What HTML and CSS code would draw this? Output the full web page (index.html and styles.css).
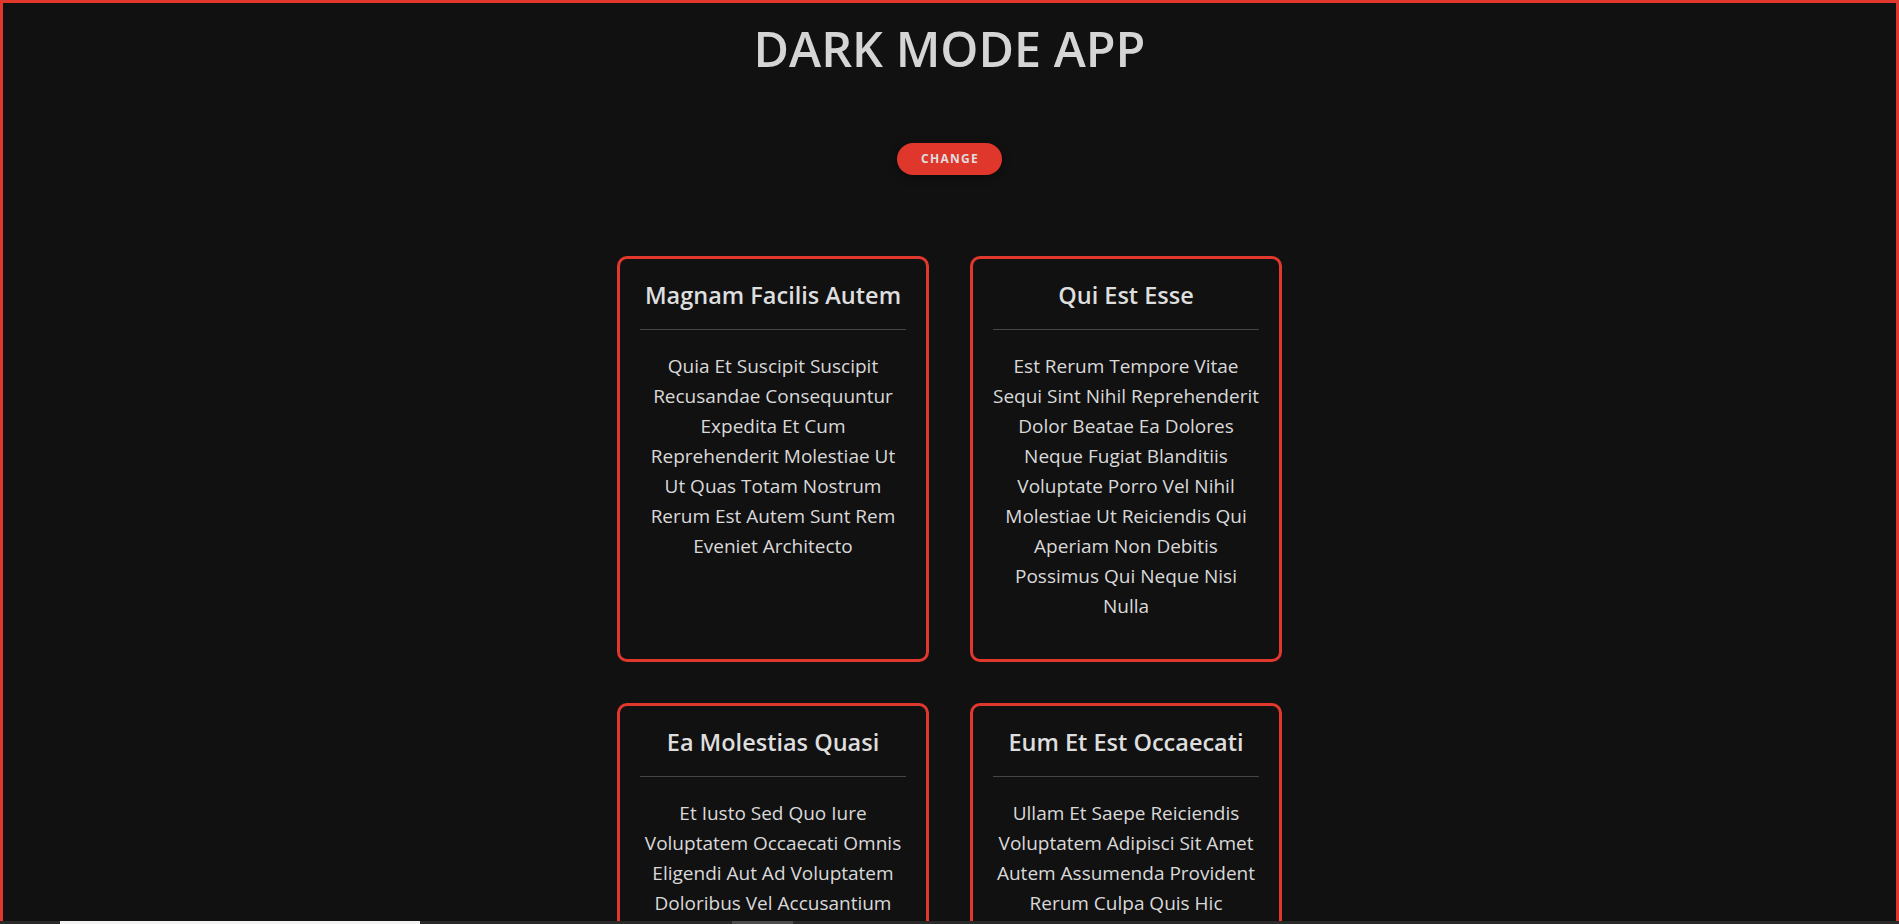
FILE: index.html
```html
<!DOCTYPE html>
<html lang="en">
<head>
<meta charset="utf-8">
<title>Dark Mode App</title>
<link rel="stylesheet" href="styles.css">
</head>
<body>
<div class="app">
  <h1 class="app-title">DARK MODE APP</h1>
  <button class="toggle" type="button">CHANGE</button>
  <main class="grid">
    <article class="card">
      <h2 class="card-title">Magnam Facilis Autem</h2>
      <p class="card-body">Quia Et Suscipit Suscipit<br>Recusandae Consequuntur<br>Expedita Et Cum<br>Reprehenderit Molestiae Ut<br>Ut Quas Totam Nostrum<br>Rerum Est Autem Sunt Rem<br>Eveniet Architecto</p>
    </article>
    <article class="card">
      <h2 class="card-title">Qui Est Esse</h2>
      <p class="card-body">Est Rerum Tempore Vitae<br>Sequi Sint Nihil Reprehenderit<br>Dolor Beatae Ea Dolores<br>Neque Fugiat Blanditiis<br>Voluptate Porro Vel Nihil<br>Molestiae Ut Reiciendis Qui<br>Aperiam Non Debitis<br>Possimus Qui Neque Nisi<br>Nulla</p>
    </article>
    <article class="card">
      <h2 class="card-title">Ea Molestias Quasi</h2>
      <p class="card-body">Et Iusto Sed Quo Iure<br>Voluptatem Occaecati Omnis<br>Eligendi Aut Ad Voluptatem<br>Doloribus Vel Accusantium<br>Quis Pariatur Molestiae Porro<br>Eius Odio Et Labore Et Velit<br>Aut</p>
    </article>
    <article class="card">
      <h2 class="card-title">Eum Et Est Occaecati</h2>
      <p class="card-body">Ullam Et Saepe Reiciendis<br>Voluptatem Adipisci Sit Amet<br>Autem Assumenda Provident<br>Rerum Culpa Quis Hic<br>Commodi Nesciunt Rem Tenetur<br>Doloremque Ipsam Iure Quis<br>Sunt Voluptatem Rerum Illo<br>Velit</p>
    </article>
  </main>
</div>
<div class="bottom-strip">
  <span class="strip-thumb"></span>
  <span class="strip-mark"></span>
</div>
</body>
</html>
```

FILE: styles.css
```css
html {
  scrollbar-width: none;
}

html::-webkit-scrollbar {
  display: none;
}

body {
  margin: 0;
  background: #111111;
  color: #dadada;
  font-family: "Open Sans", "Noto Sans", "Liberation Sans", sans-serif;
}

.app {
  box-sizing: border-box;
  min-height: 100vh;
  border: 3px solid #e0382d;
  display: flex;
  flex-direction: column;
  align-items: center;
  padding-bottom: 40px;
}

.app-title {
  margin: 16px 0 0;
  font-size: 48.5px;
  font-weight: 600;
  line-height: 58px;
  color: #d5d5d5;
}

.toggle {
  margin-top: 66px;
  padding: 8px 23px 8px 24px;
  border: none;
  border-radius: 999px;
  background: #e0372c;
  color: #dedede;
  font-family: "Open Sans", "Noto Sans", "Liberation Sans", sans-serif;
  font-size: 12px;
  font-weight: 700;
  line-height: 16px;
  letter-spacing: 1.3px;
  box-shadow: 0 2px 10px rgba(0, 0, 0, 0.45);
  cursor: pointer;
}

.grid {
  margin-top: 81px;
  display: grid;
  grid-template-columns: repeat(2, 312px);
  column-gap: 41px;
  row-gap: 41px;
}

.card {
  border: 3px solid #e0382d;
  border-radius: 10px;
  padding: 20px;
  text-align: center;
}

.card-title {
  margin: 0;
  padding-bottom: 17px;
  border-bottom: 1px solid #454545;
  font-size: 23.5px;
  font-weight: 600;
  line-height: 33px;
  color: #dedede;
}

.card-body {
  margin: 21px -6px 18px;
  font-size: 19px;
  line-height: 30px;
  color: #d9d9d9;
}

.bottom-strip {
  position: fixed;
  left: 0;
  right: 0;
  bottom: 0;
  height: 3px;
  background: #2a2a2a;
  display: flex;
  padding-left: 60px;
}

.strip-thumb {
  width: 360px;
  background: #f2f2f2;
}

.strip-mark {
  margin-left: 312px;
  width: 61px;
  background: #4d4d4d;
}
```
